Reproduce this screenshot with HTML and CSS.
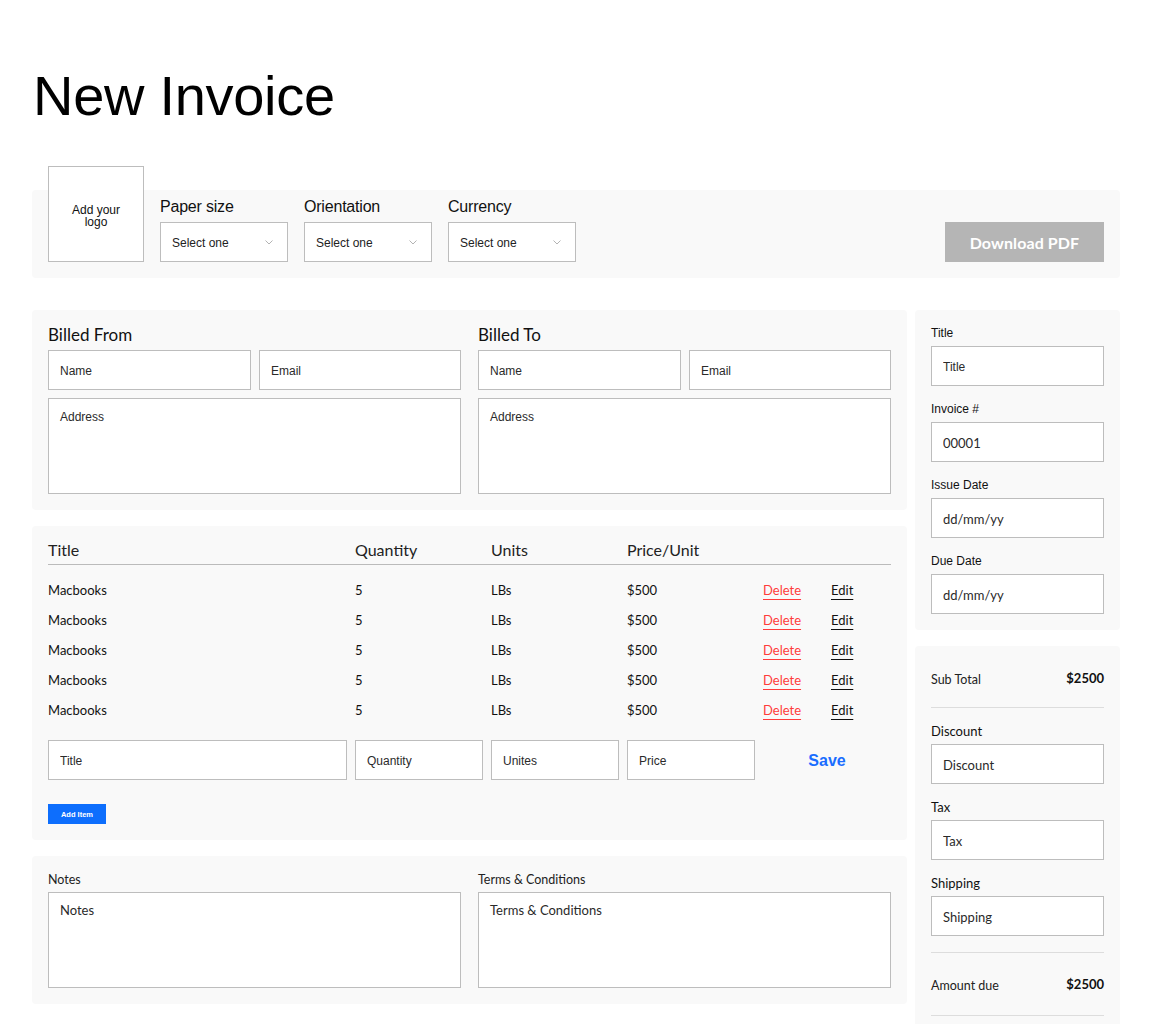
FILE: index.html
```html
<!DOCTYPE html>
<html lang="en">
<head>
<meta charset="utf-8">
<title>New Invoice</title>
<link rel="stylesheet" href="styles.css">
</head>
<body>
<div class="page">
  <h1 class="page-title">New Invoice</h1>

  <section class="toolbar">
    <div class="logo-box">Add your<br>logo</div>
    <div class="field-group">
      <div class="group-label">Paper size</div>
      <div class="select"><span>Select one</span><svg class="chev" width="8" height="5" viewBox="0 0 8 5"><path d="M0.5 0.5 L4 4 L7.5 0.5" fill="none" stroke="#aaa" stroke-width="0.9"/></svg></div>
    </div>
    <div class="field-group">
      <div class="group-label">Orientation</div>
      <div class="select"><span>Select one</span><svg class="chev" width="8" height="5" viewBox="0 0 8 5"><path d="M0.5 0.5 L4 4 L7.5 0.5" fill="none" stroke="#aaa" stroke-width="0.9"/></svg></div>
    </div>
    <div class="field-group">
      <div class="group-label">Currency</div>
      <div class="select"><span>Select one</span><svg class="chev" width="8" height="5" viewBox="0 0 8 5"><path d="M0.5 0.5 L4 4 L7.5 0.5" fill="none" stroke="#aaa" stroke-width="0.9"/></svg></div>
    </div>
    <button class="btn-download">Download PDF</button>
  </section>

  <div class="main">
    <div class="left-col">
      <section class="panel billing">
        <div class="bill-half">
          <h2 class="bill-title">Billed From</h2>
          <div class="bill-row">
            <input class="field arial" placeholder="Name">
            <input class="field arial" placeholder="Email">
          </div>
          <textarea class="area arial" placeholder="Address"></textarea>
        </div>
        <div class="bill-half">
          <h2 class="bill-title">Billed To</h2>
          <div class="bill-row">
            <input class="field arial" placeholder="Name">
            <input class="field arial" placeholder="Email">
          </div>
          <textarea class="area arial" placeholder="Address"></textarea>
        </div>
      </section>

      <section class="panel items">
        <div class="items-grid items-head">
          <div>Title</div><div>Quantity</div><div>Units</div><div>Price/Unit</div><div></div>
        </div>
        <div class="items-grid item-row"><div>Macbooks</div><div>5</div><div>LBs</div><div>$500</div><div class="actions"><a class="del">Delete</a><a class="edit">Edit</a></div></div>
        <div class="items-grid item-row"><div>Macbooks</div><div>5</div><div>LBs</div><div>$500</div><div class="actions"><a class="del">Delete</a><a class="edit">Edit</a></div></div>
        <div class="items-grid item-row"><div>Macbooks</div><div>5</div><div>LBs</div><div>$500</div><div class="actions"><a class="del">Delete</a><a class="edit">Edit</a></div></div>
        <div class="items-grid item-row"><div>Macbooks</div><div>5</div><div>LBs</div><div>$500</div><div class="actions"><a class="del">Delete</a><a class="edit">Edit</a></div></div>
        <div class="items-grid item-row"><div>Macbooks</div><div>5</div><div>LBs</div><div>$500</div><div class="actions"><a class="del">Delete</a><a class="edit">Edit</a></div></div>
        <div class="items-grid item-inputs">
          <input class="field arial" placeholder="Title">
          <input class="field arial" placeholder="Quantity">
          <input class="field arial" placeholder="Unites">
          <input class="field arial" placeholder="Price">
          <button class="btn-save">Save</button>
        </div>
        <button class="btn-add">Add Item</button>
      </section>

      <section class="panel notes">
        <div class="note-half">
          <label class="note-label">Notes</label>
          <textarea class="area geo" placeholder="Notes"></textarea>
        </div>
        <div class="note-half">
          <label class="note-label">Terms &amp; Conditions</label>
          <textarea class="area geo" placeholder="Terms &amp; Conditions"></textarea>
        </div>
      </section>
    </div>

    <div class="right-col">
      <section class="panel side">
        <div class="side-group">
          <label class="side-label arial">Title</label>
          <input class="field arial" placeholder="Title">
        </div>
        <div class="side-group">
          <label class="side-label arial">Invoice #</label>
          <input class="field geo" placeholder="00001">
        </div>
        <div class="side-group">
          <label class="side-label arial">Issue Date</label>
          <input class="field geo" placeholder="dd/mm/yy">
        </div>
        <div class="side-group">
          <label class="side-label arial">Due Date</label>
          <input class="field geo" placeholder="dd/mm/yy">
        </div>
      </section>

      <section class="panel side summary">
        <div class="sum-row sum-first"><span>Sub Total</span><span class="amount">$2500</span></div>
        <div class="side-group">
          <label class="side-label geo">Discount</label>
          <input class="field geo" placeholder="Discount">
        </div>
        <div class="side-group">
          <label class="side-label geo">Tax</label>
          <input class="field geo" placeholder="Tax">
        </div>
        <div class="side-group">
          <label class="side-label geo">Shipping</label>
          <input class="field geo" placeholder="Shipping">
        </div>
        <div class="sum-divider"></div>
        <div class="sum-row sum-last"><span>Amount due</span><span class="amount">$2500</span></div>
      </section>
    </div>
  </div>
</div>
</body>
</html>
```

FILE: styles.css
```css
* { box-sizing: border-box; }

html, body {
  margin: 0;
  padding: 0;
  background: #ffffff;
  color: #111;
  font-family: "Lato", "Liberation Sans", sans-serif;
}

.arial { font-family: "Liberation Sans", Arial, sans-serif; }
.geo { font-family: "Lato", "Liberation Sans", sans-serif; }

.page {
  padding: 0 32px;
  width: 1152px;
  overflow: hidden;
  height: 1024px;
}

.page-title {
  margin: 64px 0 62px 1px;
  font-family: "Liberation Sans", Arial, sans-serif;
  font-weight: 400;
  font-size: 56px;
  line-height: 64px;
  color: #000;
  letter-spacing: -0.3px;
}

/* toolbar */
.toolbar {
  display: flex;
  align-items: flex-end;
  gap: 16px;
  background: #f9f9f9;
  border-radius: 4px;
  padding: 16px;
  height: 88px;
}

.logo-box {
  width: 96px;
  height: 96px;
  margin-top: -40px;
  background: #fff;
  border: 1px solid #bdbdbd;
  display: flex;
  align-items: center;
  justify-content: center;
  text-align: center;
  font-family: "Liberation Sans", Arial, sans-serif;
  font-size: 12px;
  line-height: 12px;
  color: #111;
  padding-top: 4px;
}

.field-group {
  display: flex;
  flex-direction: column;
}

.group-label {
  font-family: "Liberation Sans", Arial, sans-serif;
  font-size: 16px;
  line-height: 16px;
  color: #111;
  letter-spacing: -0.2px;
  margin-top: -7px;
  margin-bottom: 7px;
}

.select {
  width: 128px;
  height: 40px;
  background: #fff;
  border: 1px solid #bdbdbd;
  display: flex;
  align-items: center;
  justify-content: space-between;
  padding: 1px 14px 0 11px;
  font-family: "Liberation Sans", Arial, sans-serif;
  font-size: 12px;
  color: #222;
}

.chev { display: block; margin-top: -1px; }

.btn-download {
  margin-left: auto;
  width: 159px;
  height: 40px;
  border: none;
  background: #b5b5b5;
  color: #fff;
  font-family: "Lato", sans-serif;
  font-weight: 700;
  font-size: 16px;
  letter-spacing: 0.1px;
  padding-top: 1px;
}

/* main layout */
.main {
  margin-top: 32px;
  display: grid;
  grid-template-columns: 875px 205px;
  gap: 8px;
  align-items: start;
}

.left-col, .right-col {
  display: flex;
  flex-direction: column;
  gap: 16px;
}

.panel {
  background: #f9f9f9;
  border-radius: 4px;
  padding: 16px;
}

/* billing */
.billing, .notes {
  display: grid;
  grid-template-columns: 1fr 1fr;
  gap: 17px;
}

.bill-title {
  margin: 0;
  font-family: "Lato", sans-serif;
  font-weight: 400;
  font-size: 17px;
  line-height: 18px;
  height: 24px;
  color: #111;
}

.bill-row {
  display: grid;
  grid-template-columns: 203px 1fr;
  gap: 8px;
  margin-bottom: 8px;
}

.field {
  display: block;
  width: 100%;
  height: 40px;
  border: 1px solid #bdbdbd;
  background: #fff;
  padding: 1px 11px 0;
  font-size: 12px;
  color: #222;
  outline: none;
  border-radius: 0;
}

.field.geo { font-size: 13px; }

.field::placeholder, .area::placeholder { color: #2a2a2a; opacity: 1; }

.area {
  display: block;
  width: 100%;
  height: 96px;
  border: 1px solid #bdbdbd;
  background: #fff;
  padding: 11px 11px;
  font-size: 12px;
  line-height: 14px;
  color: #222;
  resize: none;
  outline: none;
  border-radius: 0;
}

.area.geo { font-size: 13px; padding-top: 10px; }

/* items */
.items-grid {
  display: grid;
  grid-template-columns: 299px 128px 128px 128px 128px;
  gap: 8px;
}

.items-head {
  font-family: "Lato", sans-serif;
  font-size: 16px;
  line-height: 16px;
  height: 23px;
  border-bottom: 1px solid #bbb;
  color: #222;
}

.item-row {
  height: 30px;
  align-items: center;
  font-size: 13px;
  color: #111;
}

.items-head + .item-row { margin-top: 10px; }

.actions {
  display: flex;
}

.actions a {
  text-decoration: underline;
  text-underline-offset: 4px;
  text-decoration-thickness: 1px;
  cursor: pointer;
}

.del { color: #ff3b3b; width: 68px; }
.edit { color: #111; }

.item-inputs {
  margin-top: 15px;
}

.btn-save {
  border: none;
  background: transparent;
  color: #1a6dff;
  font-family: "Liberation Sans", Arial, sans-serif;
  font-weight: 700;
  font-size: 16px;
  height: 40px;
  padding: 1px 0 0;
}

.btn-add {
  display: block;
  margin-top: 24px;
  width: 58px;
  height: 20px;
  border: none;
  background: #0d6efd;
  color: #fff;
  font-family: "Liberation Sans", Arial, sans-serif;
  font-weight: 700;
  font-size: 7.5px;
  padding: 0;
}

/* notes */
.note-label {
  display: block;
  font-family: "Lato", sans-serif;
  font-size: 12.5px;
  line-height: 15px;
  height: 20px;
  color: #222;
}

/* side */
.side-group + .side-group { margin-top: 16px; }

.side-label {
  display: block;
  font-size: 12px;
  line-height: 14px;
  height: 20px;
  color: #111;
}

.side-label.geo { font-size: 13px; }

.sum-row {
  display: flex;
  justify-content: space-between;
  font-family: "Lato", sans-serif;
  font-size: 12.5px;
  line-height: 20px;
  color: #222;
  border-bottom: 1px solid #ddd;
}

.sum-row .amount {
  font-weight: 700;
  font-size: 13px;
  color: #111;
  margin-top: -2px;
}

.sum-first {
  padding: 8px 0 17px;
  margin-bottom: 16px;
}

.sum-divider {
  margin-top: 16px;
  border-top: 1px solid #ddd;
}

.sum-last {
  padding: 23px 0 19px;
}

.summary { padding-bottom: 40px; }
```
